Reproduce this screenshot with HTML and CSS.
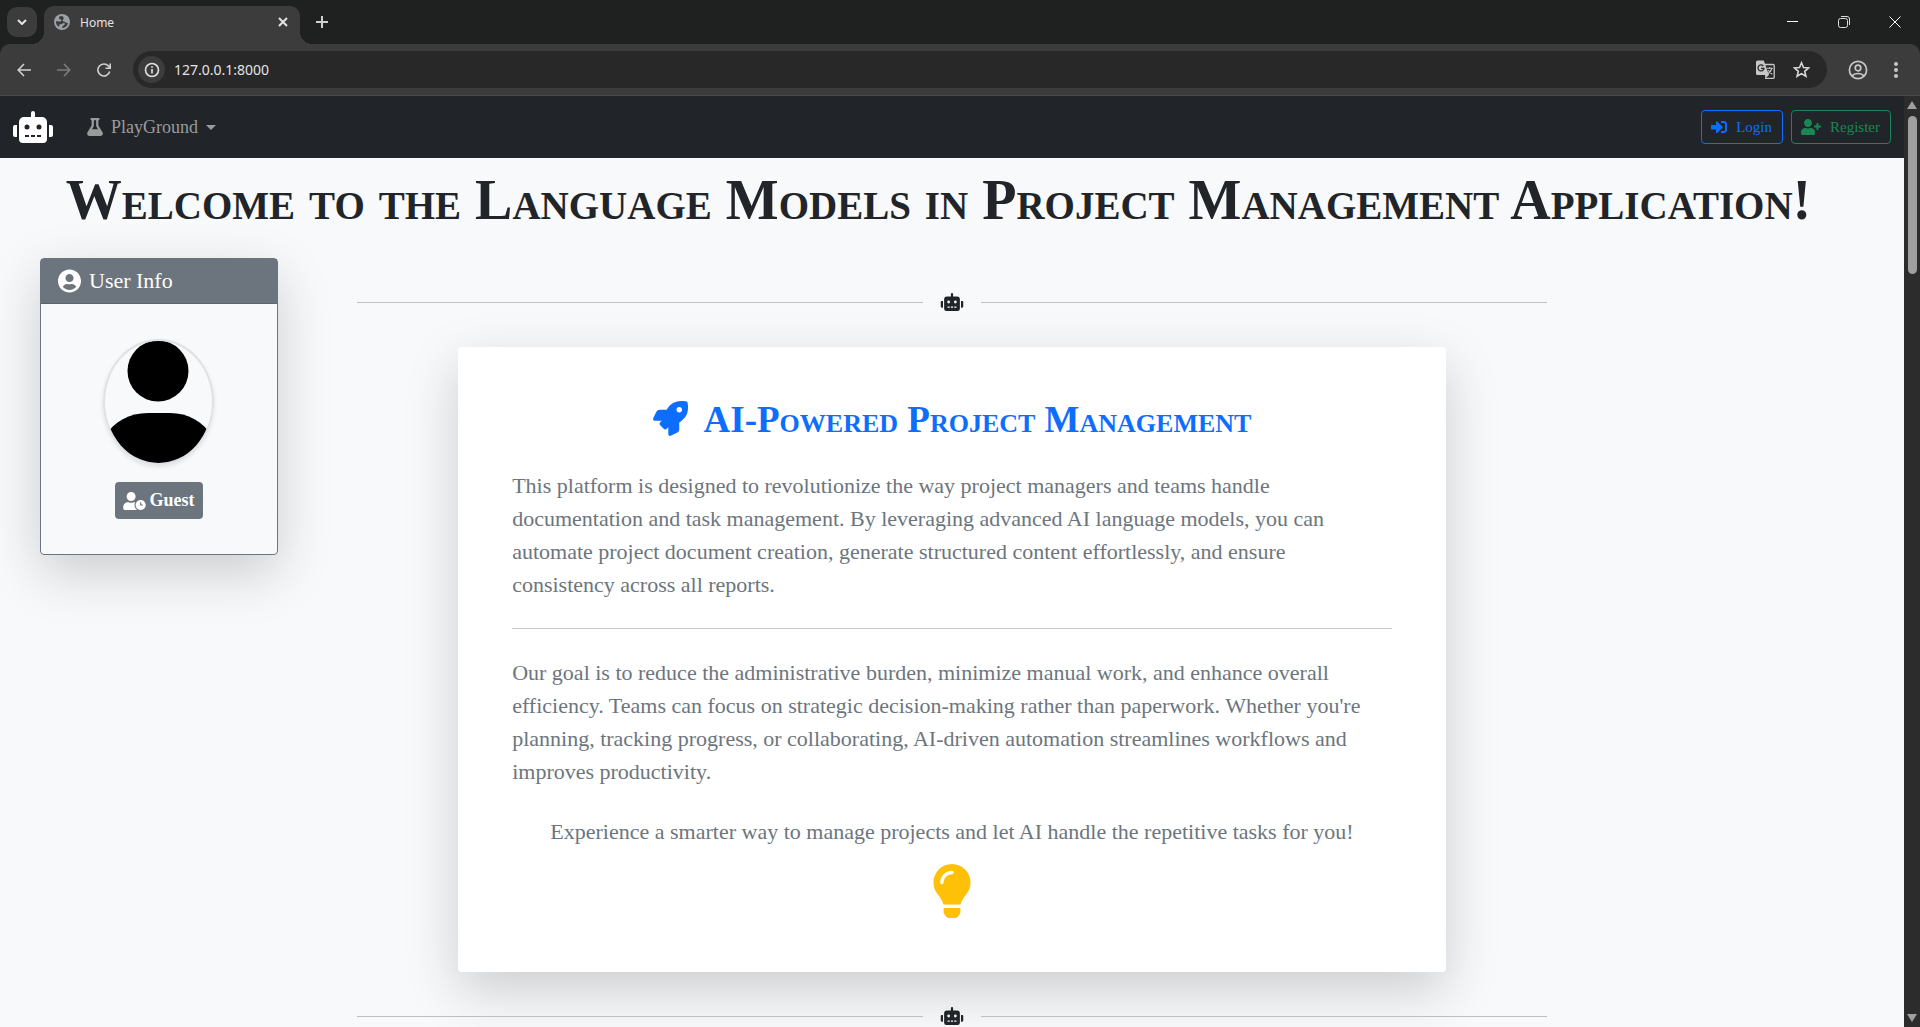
FILE: index.html
```html
<!DOCTYPE html>
<html lang="en">
<head>
<meta charset="utf-8">
<title>Home</title>
<link rel="stylesheet" href="styles.css">
</head>
<body>
<svg class="sprite" aria-hidden="true">
  <symbol id="robot" viewBox="0 0 640 512"><path d="M32,224H64V416H32A31.96166,31.96166,0,0,1,0,384V256A31.96166,31.96166,0,0,1,32,224Zm512-48V448a64.06328,64.06328,0,0,1-64,64H160a64.06328,64.06328,0,0,1-64-64V176a79.974,79.974,0,0,1,80-80H288V32a32,32,0,0,1,64,0V96H464A79.974,79.974,0,0,1,544,176ZM264,256a40,40,0,1,0-40,40A39.997,39.997,0,0,0,264,256Zm-8,128H192v32h64Zm96,0H288v32h64ZM456,256a40,40,0,1,0-40,40A39.997,39.997,0,0,0,456,256Zm-8,128H384v32h64ZM640,256V384a31.96166,31.96166,0,0,1-32,32H576V224h32A31.96166,31.96166,0,0,1,640,256Z"/></symbol>
</svg>

<header class="browser">
  <div class="tabstrip">
    <button class="tab-search" aria-label="Search tabs"><svg width="10" height="6" viewBox="0 0 10 6"><path d="M1 1l4 4 4-4" fill="none" stroke="#e3e3e3" stroke-width="2"/></svg></button>
    <div class="tab">
      <svg width="16" height="16" viewBox="0 0 16 16"><circle cx="8" cy="8" r="8" fill="#9aa0a6"/><path d="M7.500 2C5.500 2.200 4.800 3 5 4.200c.3 1.300 1.800.9 2.300 1.900.4 1-.5 1.600-1.600 1.500L2 7.200c-.3 2.500 1 4.600 3 5.600l.2-1.500c0-1 1-.9 1.800-1.100 1.300-.3 1.700-1.300 3-1.200 1.200.1 1 1.500.2 2.100-.9.700-2 .8-2.200 2.700 3 .3 5.500-2 5.900-4.900-1.200.4-1.900-.2-2.700-.9-.8-.8-2.200-.2-2.600-1.300-.3-1 .9-1.300 1.100-2.300C9.900 3.400 9 2.300 7.500 2z" fill="#3c3c3c"/></svg>
      <span class="tab-title">Home</span>
      <button class="icon-btn" aria-label="Close tab"><svg width="10" height="10" viewBox="0 0 10 10"><path d="M1 1l8 8M9 1L1 9" stroke="#e3e3e3" stroke-width="2"/></svg></button>
    </div>
    <button class="icon-btn new-tab" aria-label="New tab"><svg width="12" height="12" viewBox="0 0 12 12"><path d="M6 0v12M0 6h12" stroke="#d0d0d0" stroke-width="2"/></svg></button>
    <div class="window-controls">
      <button class="icon-btn" aria-label="Minimize"><svg width="12" height="12" viewBox="0 0 12 12"><path d="M0 5.500h11" stroke="#fff"/></svg></button>
      <button class="icon-btn" aria-label="Restore"><svg width="12" height="12" viewBox="0 0 12 12"><path d="M.5 4.500a2 2 0 0 1 2-2h5a2 2 0 0 1 2 2v5a2 2 0 0 1-2 2h-5a2 2 0 0 1-2-2zM3 .5h6a2.500 2.500 0 0 1 2.500 2.500v6" fill="none" stroke="#ddd"/></svg></button>
      <button class="icon-btn" aria-label="Close"><svg width="12" height="12" viewBox="0 0 12 12"><path d="M.5.5l11 11M11.500.5l-11 11" stroke="#fff"/></svg></button>
    </div>
  </div>
  <div class="toolbar">
    <button class="icon-btn" aria-label="Back"><svg width="14" height="14" viewBox="0 0 14 14"><path d="M14 7H1.500M7 1L1.200 7 7 13" fill="none" stroke="#d0d0d0" stroke-width="1.600"/></svg></button>
    <button class="icon-btn" aria-label="Forward"><svg width="14" height="14" viewBox="0 0 14 14"><path d="M0 7h12.500M7 1l5.800 6L7 13" fill="none" stroke="#7c7c7c" stroke-width="1.600"/></svg></button>
    <button class="icon-btn" aria-label="Reload"><svg width="14" height="14" viewBox="0 0 14 14"><path d="M12.700 8.500A6 6 0 1 1 11.500 3.100L13 4.800M13.200.5v4.700H8.500" fill="none" stroke="#d0d0d0" stroke-width="1.600"/></svg></button>
    <div class="omnibox">
      <button class="site-info" aria-label="View site information"><svg width="16" height="16" viewBox="0 0 16 16"><circle cx="8" cy="8" r="6.500" fill="none" stroke="#e3e3e3" stroke-width="1.600"/><path d="M8 7v4.500M8 4.300v1.500" stroke="#e3e3e3" stroke-width="1.600"/></svg></button>
      <input class="url" type="text" value="127.0.0.1:8000" aria-label="Address">
      <button class="icon-btn" aria-label="Translate"><svg width="19" height="19" viewBox="0 0 19 19"><path d="M9 4.500h8.200a1 1 0 0 1 1 1v11.800a1 1 0 0 1-1 1H9" fill="none" stroke="#c7c7c7" stroke-width="1.300"/><path d="M1.500.5h6.300L13 15H1.500A1.500 1.500 0 0 1 0 13.500V2A1.500 1.500 0 0 1 1.500.5z" fill="#c7c7c7"/><path d="M9.300 18.500L13 15l-4-.2z" fill="#c7c7c7"/><path d="M7.300 6A3 3 0 1 0 8 8.300H5" fill="none" stroke="#282828" stroke-width="1.300"/><path d="M10.800 8.300h6M13.800 7v1.300M15.800 8.500c-.7 2.500-2 4-3.800 5.200M12.300 10c1 2 2.200 3.300 4 4.200" fill="none" stroke="#c7c7c7" stroke-width="1.100"/></svg></button>
      <button class="icon-btn" aria-label="Bookmark this tab"><svg width="17" height="17" viewBox="0 0 17 17"><path d="M8.500 1.800l2 4.700 5.100.4-3.900 3.400 1.200 5-4.400-2.700-4.400 2.700 1.200-5L1.400 6.900l5.100-.4z" fill="none" stroke="#d6d6d6" stroke-width="1.600"/></svg></button>
    </div>
    <button class="icon-btn" aria-label="Profile"><svg width="20" height="20" viewBox="0 0 20 20"><g fill="none" stroke="#c7c7c7" stroke-width="1.700"><circle cx="10" cy="10" r="8.600"/><circle cx="10" cy="8" r="2.800"/><path d="M4 16c1.500-1.800 3.600-2.500 6-2.500s4.500.7 6 2.500"/></g></svg></button>
    <button class="icon-btn" aria-label="Menu"><svg width="4" height="16" viewBox="0 0 4 16"><g fill="#c7c7c7"><circle cx="2" cy="2" r="2"/><circle cx="2" cy="8" r="2"/><circle cx="2" cy="14" r="2"/></g></svg></button>
  </div>
</header>

<div class="viewport">
  <div class="page">
    <nav class="navbar">
      <a href="#" class="brand" aria-label="Home"><svg width="40" height="32"><use href="#robot"/></svg></a>
      <a href="#" class="nav-link">
        <svg width="16" height="18" viewBox="0 0 448 512"><path d="M437.200 403.500L320 215V64h8c13.300 0 24-10.700 24-24V24c0-13.300-10.700-24-24-24H120c-13.300 0-24 10.700-24 24v16c0 13.300 10.700 24 24 24h8v151L10.800 403.500C-18.500 450.600 15.300 512 70.900 512h306.200c55.700 0 89.400-61.500 60.100-108.500zM137.900 320l48.200-77.600c3.700-5.200 5.800-11.600 5.800-18.400V64h64v160c0 6.900 2.200 13.200 5.800 18.400l48.200 77.600h-172z"/></svg>
        <span>PlayGround</span><i class="caret"></i>
      </a>
      <a href="#" class="btn btn-login"><svg width="16" height="16" viewBox="0 0 512 512"><path d="M416 448h-84c-6.600 0-12-5.400-12-12v-40c0-6.600 5.400-12 12-12h84c17.700 0 32-14.300 32-32V160c0-17.700-14.300-32-32-32h-84c-6.600 0-12-5.400-12-12V76c0-6.600 5.400-12 12-12h84c53 0 96 43 96 96v192c0 53-43 96-96 96zm-47-201L201 79c-15-15-41-4.500-41 17v96H24c-13.300 0-24 10.700-24 24v96c0 13.300 10.700 24 24 24h136v96c0 21.500 26 32 41 17l168-168c9.300-9.400 9.300-24.600 0-34z"/></svg><span>Login</span></a>
      <a href="#" class="btn btn-register"><svg width="20" height="16" viewBox="0 0 640 512"><path d="M624 208h-64v-64c0-8.800-7.200-16-16-16h-32c-8.800 0-16 7.200-16 16v64h-64c-8.800 0-16 7.200-16 16v32c0 8.800 7.200 16 16 16h64v64c0 8.800 7.200 16 16 16h32c8.800 0 16-7.200 16-16v-64h64c8.800 0 16-7.200 16-16v-32c0-8.800-7.200-16-16-16zm-400 48c70.700 0 128-57.300 128-128S294.700 0 224 0 96 57.300 96 128s57.300 128 128 128zm89.600 32h-16.700c-22.200 10.200-46.900 16-72.900 16s-50.600-5.800-72.900-16h-16.700C60.200 288 0 348.200 0 422.400V464c0 26.500 21.500 48 48 48h352c26.500 0 48-21.500 48-48v-41.600c0-74.200-60.200-134.400-134.400-134.400z"/></svg><span>Register</span></a>
    </nav>

    <h1 class="title">Welcome to the Language Models in Project Management Application!</h1>

    <div class="layout">
      <aside class="user-card">
        <div class="user-head">
          <svg width="23" height="24" viewBox="0 0 496 512"><path d="M248 8C111 8 0 119 0 256s111 248 248 248 248-111 248-248S385 8 248 8zm0 96c48.600 0 88 39.400 88 88s-39.400 88-88 88-88-39.400-88-88 39.400-88 88-88zm0 344c-58.700 0-111.300-26.600-146.500-68.200 18.800-35.400 55.600-59.800 98.500-59.800 2.400 0 4.800.4 7.100 1.100 13 4.200 26.600 6.900 40.900 6.900 14.300 0 28-2.700 40.900-6.900 2.300-.7 4.700-1.100 7.100-1.100 42.900 0 79.700 24.400 98.500 59.800C359.300 421.400 306.700 448 248 448z"/></svg>
          <span>User Info</span>
        </div>
        <div class="user-body">
          <svg class="avatar" viewBox="0 0 107 122" role="img" aria-label="Guest avatar"><circle cx="53" cy="30" r="30.500"/><path d="M-7 122C-7 92 15 72 43 72H65C92 72 114 92 114 122z"/></svg>
          <span class="badge"><svg width="23" height="18" viewBox="0 0 640 512"><path d="M496 224c-79.600 0-144 64.400-144 144s64.400 144 144 144 144-64.400 144-144-64.400-144-144-144zm64 150.300c0 5.300-4.400 9.700-9.700 9.700h-60.600c-5.300 0-9.700-4.400-9.700-9.700v-76.600c0-5.300 4.400-9.700 9.700-9.700h12.600c5.300 0 9.700 4.400 9.700 9.700V352h38.300c5.300 0 9.700 4.400 9.700 9.700v12.600zM320 368c0-27.800 6.700-54.100 18.200-77.500-8-1.500-16.200-2.500-24.600-2.500h-16.700c-22.200 10.200-46.900 16-72.900 16s-50.600-5.800-72.900-16h-16.700C60.200 288 0 348.200 0 422.400V464c0 26.500 21.500 48 48 48h347.100c-45.300-31.900-75.100-84.500-75.100-144zm-96-112c70.700 0 128-57.300 128-128S294.700 0 224 0 96 57.300 96 128s57.300 128 128 128z"/></svg><span>Guest</span></span>
        </div>
      </aside>

      <main class="content">
        <div class="divider"><svg width="24" height="18"><use href="#robot"/></svg></div>
        <section class="card">
          <h2 class="card-title">
            <svg width="35" height="35" viewBox="0 0 512 512"><path d="M505.120 19.094c-1.189-5.531-6.658-11-12.207-12.188C460.716 0 435.507 0 410.407 0 307.175 0 245.269 55.203 199.052 128H94.838c-16.348.016-35.557 11.875-42.887 26.484L2.516 253.297A28.400 28.400 0 0 0 0 264a24.009 24.009 0 0 0 24.006 24H127.816l-22.475 22.469c-11.365 11.361-12.996 32.258 0 45.250L156.246 406.625c11.156 11.188 32.156 13.156 45.277 0l22.475-22.469V488a24.009 24.009 0 0 0 24.006 24 28.559 28.559 0 0 0 10.707-2.516l98.728-49.391c14.629-7.297 26.508-26.500 26.508-42.859V312.797c72.598-46.313 128.035-108.406 128.035-211.094C512.075 76.500 512.075 51.297 505.120 19.094ZM384.040 168A40 40 0 1 1 424.050 128 40.023 40.023 0 0 1 384.040 168Z"/></svg>
            <span>AI-Powered Project Management</span>
          </h2>
          <p>This platform is designed to revolutionize the way project managers and teams handle documentation and task management. By leveraging advanced AI language models, you can automate project document creation, generate structured content effortlessly, and ensure consistency across all reports.</p>
          <hr>
          <p>Our goal is to reduce the administrative burden, minimize manual work, and enhance overall efficiency. Teams can focus on strategic decision-making rather than paperwork. Whether you're planning, tracking progress, or collaborating, AI-driven automation streamlines workflows and improves productivity.</p>
          <p class="closing">Experience a smarter way to manage projects and let AI handle the repetitive tasks for you!</p>
          <svg class="bulb" width="38" height="54" viewBox="0 0 352 512"><path d="M96.060 454.350c.01 6.290 1.870 12.450 5.360 17.690l17.090 25.690a31.990 31.990 0 0 0 26.640 14.280h61.710a31.990 31.990 0 0 0 26.640-14.280l17.090-25.690a31.989 31.989 0 0 0 5.360-17.690l.04-38.350H96.010l.05 38.350zM0 176c0 44.370 16.450 84.850 43.560 115.780 16.520 18.850 42.360 58.230 52.210 91.450.04.26.07.52.11.78h160.240c.04-.26.07-.51.11-.78 9.850-33.220 35.690-72.600 52.210-91.450C335.550 260.850 352 220.370 352 176 352 78.610 272.910-.3 175.450 0 73.440.31 0 82.970 0 176zm176-80c-44.110 0-80 35.890-80 80 0 8.840-7.160 16-16 16s-16-7.160-16-16c0-61.760 50.240-112 112-112 8.840 0 16 7.160 16 16s-7.160 16-16 16z"/></svg>
        </section>
        <div class="divider"><svg width="24" height="18"><use href="#robot"/></svg></div>
      </main>
    </div>
  </div>

  <div class="scrollbar" aria-hidden="true">
    <i class="arrow-up"></i>
    <div class="track"><i class="thumb"></i></div>
    <i class="arrow-down"></i>
  </div>
</div>
</body>
</html>
```
FILE: styles.css
```css
* { box-sizing: border-box; }

body {
  margin: 0;
  height: 100vh;
  display: flex;
  flex-direction: column;
  overflow: hidden;
  background: #f8f9fa;
  color: #212529;
  font-family: "Liberation Serif", "Times New Roman", serif;
  font-size: 16px;
}

svg { display: block; flex: none; fill: currentColor; }
button { margin: 0; padding: 0; border: 0; background: none; color: inherit; font: inherit; }
a { color: inherit; text-decoration: none; }
.sprite { position: absolute; width: 0; height: 0; }

/* Browser frame */
.browser {
  flex: none;
  background: #1f2120;
  color: #e3e3e3;
  font-family: "Noto Sans", sans-serif;
  font-size: 12px;
}
.tabstrip { display: flex; height: 44px; padding-left: 7px; }
.icon-btn { display: flex; align-items: center; justify-content: center; flex: none; }
.tab-search {
  display: flex;
  align-items: center;
  justify-content: center;
  width: 30px;
  height: 30px;
  margin-top: 7px;
  border-radius: 10px;
  background: #3c3c3c;
}
.tab {
  position: relative;
  display: flex;
  align-items: center;
  gap: 10px;
  width: 256px;
  height: 38px;
  margin: 6px 0 0 7px;
  padding: 0 12px 6px 10px;
  border-radius: 10px 10px 0 0;
  background: #3c3c3c;
}
.tab::before, .tab::after {
  content: "";
  position: absolute;
  bottom: 0;
  width: 12px;
  height: 12px;
}
.tab::before { right: 100%; background: radial-gradient(circle at 0 0, transparent 12px, #3c3c3c 12px); }
.tab::after { left: 100%; background: radial-gradient(circle at 100% 0, transparent 12px, #3c3c3c 12px); }
.tab-title { flex: 1; }
.new-tab { width: 44px; }
.window-controls { display: flex; margin-left: auto; }
.window-controls .icon-btn { width: 51px; }

.toolbar {
  display: flex;
  align-items: center;
  gap: 26px;
  height: 52px;
  padding: 0 22px 0 17px;
  border-bottom: 1px solid #4b4b4b;
  border-radius: 10px 10px 0 0;
  background: #3c3c3c;
}
.omnibox {
  display: flex;
  align-items: center;
  flex: 1;
  gap: 18px;
  height: 37px;
  margin-left: -4px;
  margin-right: -5px;
  padding: 0 17px 0 5px;
  border-radius: 19px;
  background: #282828;
}
.site-info {
  display: flex;
  align-items: center;
  justify-content: center;
  width: 27px;
  height: 27px;
  border-radius: 50%;
  background: #3c3c3c;
}
.url {
  flex: 1;
  margin-left: -9px;
  padding: 0;
  border: 0;
  background: none;
  color: #e3e3e3;
  font-family: "Noto Sans", sans-serif;
  font-size: 14px;
}

/* Page viewport */
.viewport { display: flex; flex: 1; min-height: 0; }
.page { flex: 1; min-width: 0; overflow: hidden; }

.scrollbar {
  display: flex;
  flex-direction: column;
  align-items: center;
  width: 16px;
  padding: 5px 0 5px;
  background: #2c2c2c;
}
.arrow-up, .arrow-down { border: 5px solid transparent; }
.arrow-up { border-top: 0; border-bottom: 8px solid #9f9f9f; }
.arrow-down { border-bottom: 0; border-top: 8px solid #9f9f9f; }
.track { flex: 1; padding-top: 7px; }
.thumb { display: block; width: 9px; height: 158px; border-radius: 5px; background: #9f9f9f; }

/* Navbar */
.navbar {
  display: flex;
  align-items: center;
  gap: 8px;
  height: 62px;
  padding: 0 13px;
  background: #212529;
}
.brand { color: #fff; }
.nav-link {
  display: flex;
  align-items: center;
  gap: 8px;
  margin: 0 auto 0 26px;
  color: #999b9d;
  font-size: 18px;
}
.caret { border: 5px solid transparent; border-top-color: currentColor; border-bottom: 0; }
.btn {
  display: flex;
  align-items: center;
  gap: 9px;
  height: 34px;
  padding: 0 10px 0 9px;
  border: 1px solid currentColor;
  border-radius: 4px;
  font-size: 15px;
}
.btn-login { color: #0d6efd; }
.btn-register { color: #198754; }

/* Page body */
.title {
  margin: 8px 0 0;
  padding: 0 27px 0 0;
  font-size: 56px;
  line-height: 68px;
  font-weight: 700;
  font-variant: small-caps;
  text-align: center;
  white-space: nowrap;
}
.layout {
  display: grid;
  grid-template-columns: 3fr 10fr 3fr;
  align-items: start;
  padding-top: 24px;
}

.user-card {
  margin: 0 79px 0 40px;
  border: 1px solid #6c757d;
  border-radius: 4px;
  box-shadow: 0 18px 54px rgba(0, 0, 0, .18);
}
.user-head {
  display: flex;
  align-items: center;
  gap: 8px;
  height: 45px;
  padding: 0 17px;
  border-bottom: 1px solid #5d656d;
  background: #6c757d;
  color: #fff;
  font-size: 22px;
}
.user-body {
  display: flex;
  flex-direction: column;
  align-items: center;
  gap: 17px;
  padding: 35px 17px 35px 16px;
}
.avatar {
  width: 111px;
  height: 126px;
  border: 2px solid #dee2e6;
  border-radius: 50%;
  overflow: hidden;
  fill: #000;
  box-shadow: 0 2px 4px rgba(0, 0, 0, .1);
}
.badge {
  display: flex;
  align-items: center;
  gap: 4px;
  height: 37px;
  padding: 0 8px;
  border-radius: 4px;
  background: #6c757d;
  color: #fff;
  font-size: 18px;
  font-weight: 700;
}

.divider { display: flex; align-items: center; gap: 17px; height: 20px; margin-top: 34px; }
.divider::before, .divider::after { content: ""; flex: 1; height: 1px; background: #bdbfc2; }

.card {
  width: 83%;
  margin: 35px auto 0;
  padding: 52px 54px 54px;
  border-radius: 4px;
  background: #fff;
  color: #6c757d;
  font-size: 22px;
  line-height: 33px;
  box-shadow: 0 18px 54px rgba(0, 0, 0, .18);
}
.card-title {
  display: flex;
  align-items: center;
  justify-content: center;
  gap: 16px;
  margin: 0 0 28px;
  color: #0d6efd;
  font-size: 37px;
  line-height: 42px;
  font-variant: small-caps;
}
.card-title svg { margin-bottom: 4px; }
.card p { margin: 0 0 27px; }
.card hr { height: 1px; margin: 27px 0; border: 0; background: #c4c7ca; }
.card .closing { margin-bottom: 16px; text-align: center; }
.bulb { margin: 0 auto; color: #ffc107; }
```
